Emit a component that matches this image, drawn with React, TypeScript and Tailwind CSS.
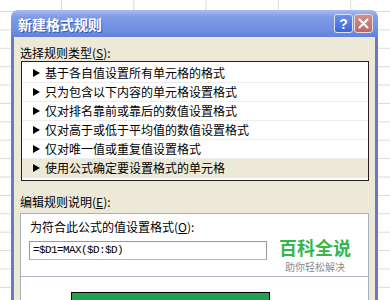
import React from 'react';

const rules = [
  '基于各自值设置所有单元格的格式',
  '只为包含以下内容的单元格设置格式',
  '仅对排名靠前或靠后的数值设置格式',
  '仅对高于或低于平均值的数值设置格式',
  '仅对唯一值或重复值设置格式',
  '使用公式确定要设置格式的单元格',
];

function Arrow() {
  return (
    <svg width="7" height="8" viewBox="0 0 7 8" className="shrink-0">
      <polygon points="0,0 7,4 0,8" fill="#000" />
    </svg>
  );
}

export default function App() {
  return (
    <div className="w-[390px] h-[300px] overflow-hidden bg-white pt-[10px] pl-[11px] [font-family:'Noto_Sans_CJK_SC',sans-serif] [background-image:linear-gradient(to_bottom,#dadada_1px,transparent_1px),linear-gradient(to_right,#dcdcdc_1px,transparent_1px)] [background-size:100%_18.4px,72.3px_100%] [background-position:0_11px,61px_0]">
      <div className="w-[367px] flex flex-col">
        {/* Title bar */}
        <div className="h-[27px] rounded-t-[7px] bg-[linear-gradient(to_bottom,#a9bdf0,#7f9ce6_25%,#6e8ee0_75%,#6282d8)] flex items-center pl-[7px] pr-[5px] gap-px">
          <span className="flex-1 text-white font-bold text-[14px] leading-none [text-shadow:1px_1px_0_#3a5ab0]">
            新建格式规则
          </span>
          <div className="w-[19px] h-[19px] rounded-[3px] border border-[#d8e2fa] bg-[linear-gradient(to_bottom,#6d8fe8,#3f66d4)] flex items-center justify-center text-white font-bold text-[14px] leading-none [font-family:'Liberation_Sans',sans-serif]">
            ?
          </div>
          <div className="w-[19px] h-[19px] rounded-[3px] border border-[#e8d8e0] bg-[linear-gradient(to_bottom,#d0908c,#b86a6a)] flex items-center justify-center">
            <svg width="11" height="11" viewBox="0 0 11 11">
              <path d="M1.5 1.5 L9.5 9.5 M9.5 1.5 L1.5 9.5" stroke="#fff" strokeWidth="2" strokeLinecap="round" />
            </svg>
          </div>
        </div>

        {/* Body */}
        <div className="h-[263px] bg-[#ECE9D8] border-x-[3px] border-x-[#6e78c2] px-[6px] pt-[9px] text-[12px] text-black">
          <div className="h-[14px] leading-[14px]">
            选择规则类型(<span className="underline">S</span>):
          </div>
          <div className="mt-px ml-px border border-[#202020] bg-white py-[2px]">
            {rules.map((r, i) => (
              <div
                key={i}
                className={`h-[19px] flex items-center gap-[5px] pl-[11px] border-b border-[#ededed] ${i === rules.length - 1 ? 'bg-[#ECE9D8] border-b-transparent' : ''}`}
              >
                <Arrow />
                <span className="leading-none">{r}</span>
              </div>
            ))}
          </div>

          <div className="mt-[14px] h-[14px] leading-[14px]">
            编辑规则说明(<span className="underline">E</span>):
          </div>
          <div className="relative mt-[4px] h-[120px] bg-white border border-[#a9b0bc]">
            <div className="mt-[6px] ml-[9px] h-[14px] leading-[14px]">
              为符合此公式的值设置格式(<span className="underline">O</span>):
            </div>
            <div className="mt-[7px] ml-[8px] w-[238px] h-[19px] border border-[#9a9a9a] border-b-[#b8b8b8] flex items-center pl-[3px] text-[11px] tracking-[-0.6px] [font-family:'Liberation_Mono',monospace]">
              =$D1=MAX($D:$D)
            </div>
            <div className="mt-[16px] h-px bg-[#b4bccb]" />
            <div className="mt-[15px] ml-[50px] w-[199px] h-[30px] border border-black bg-[#22a24e]" />

            {/* watermark */}
            <div className="absolute left-[258px] top-[24px] flex flex-col items-center">
              <span className="text-[18px] leading-[18px] font-bold text-[#35b54b]">百科全说</span>
              <span className="text-[10px] leading-[10px] text-[#8a8a8a] mt-[6px]">助你轻松解决</span>
            </div>
          </div>
        </div>
      </div>
    </div>
  );
}
